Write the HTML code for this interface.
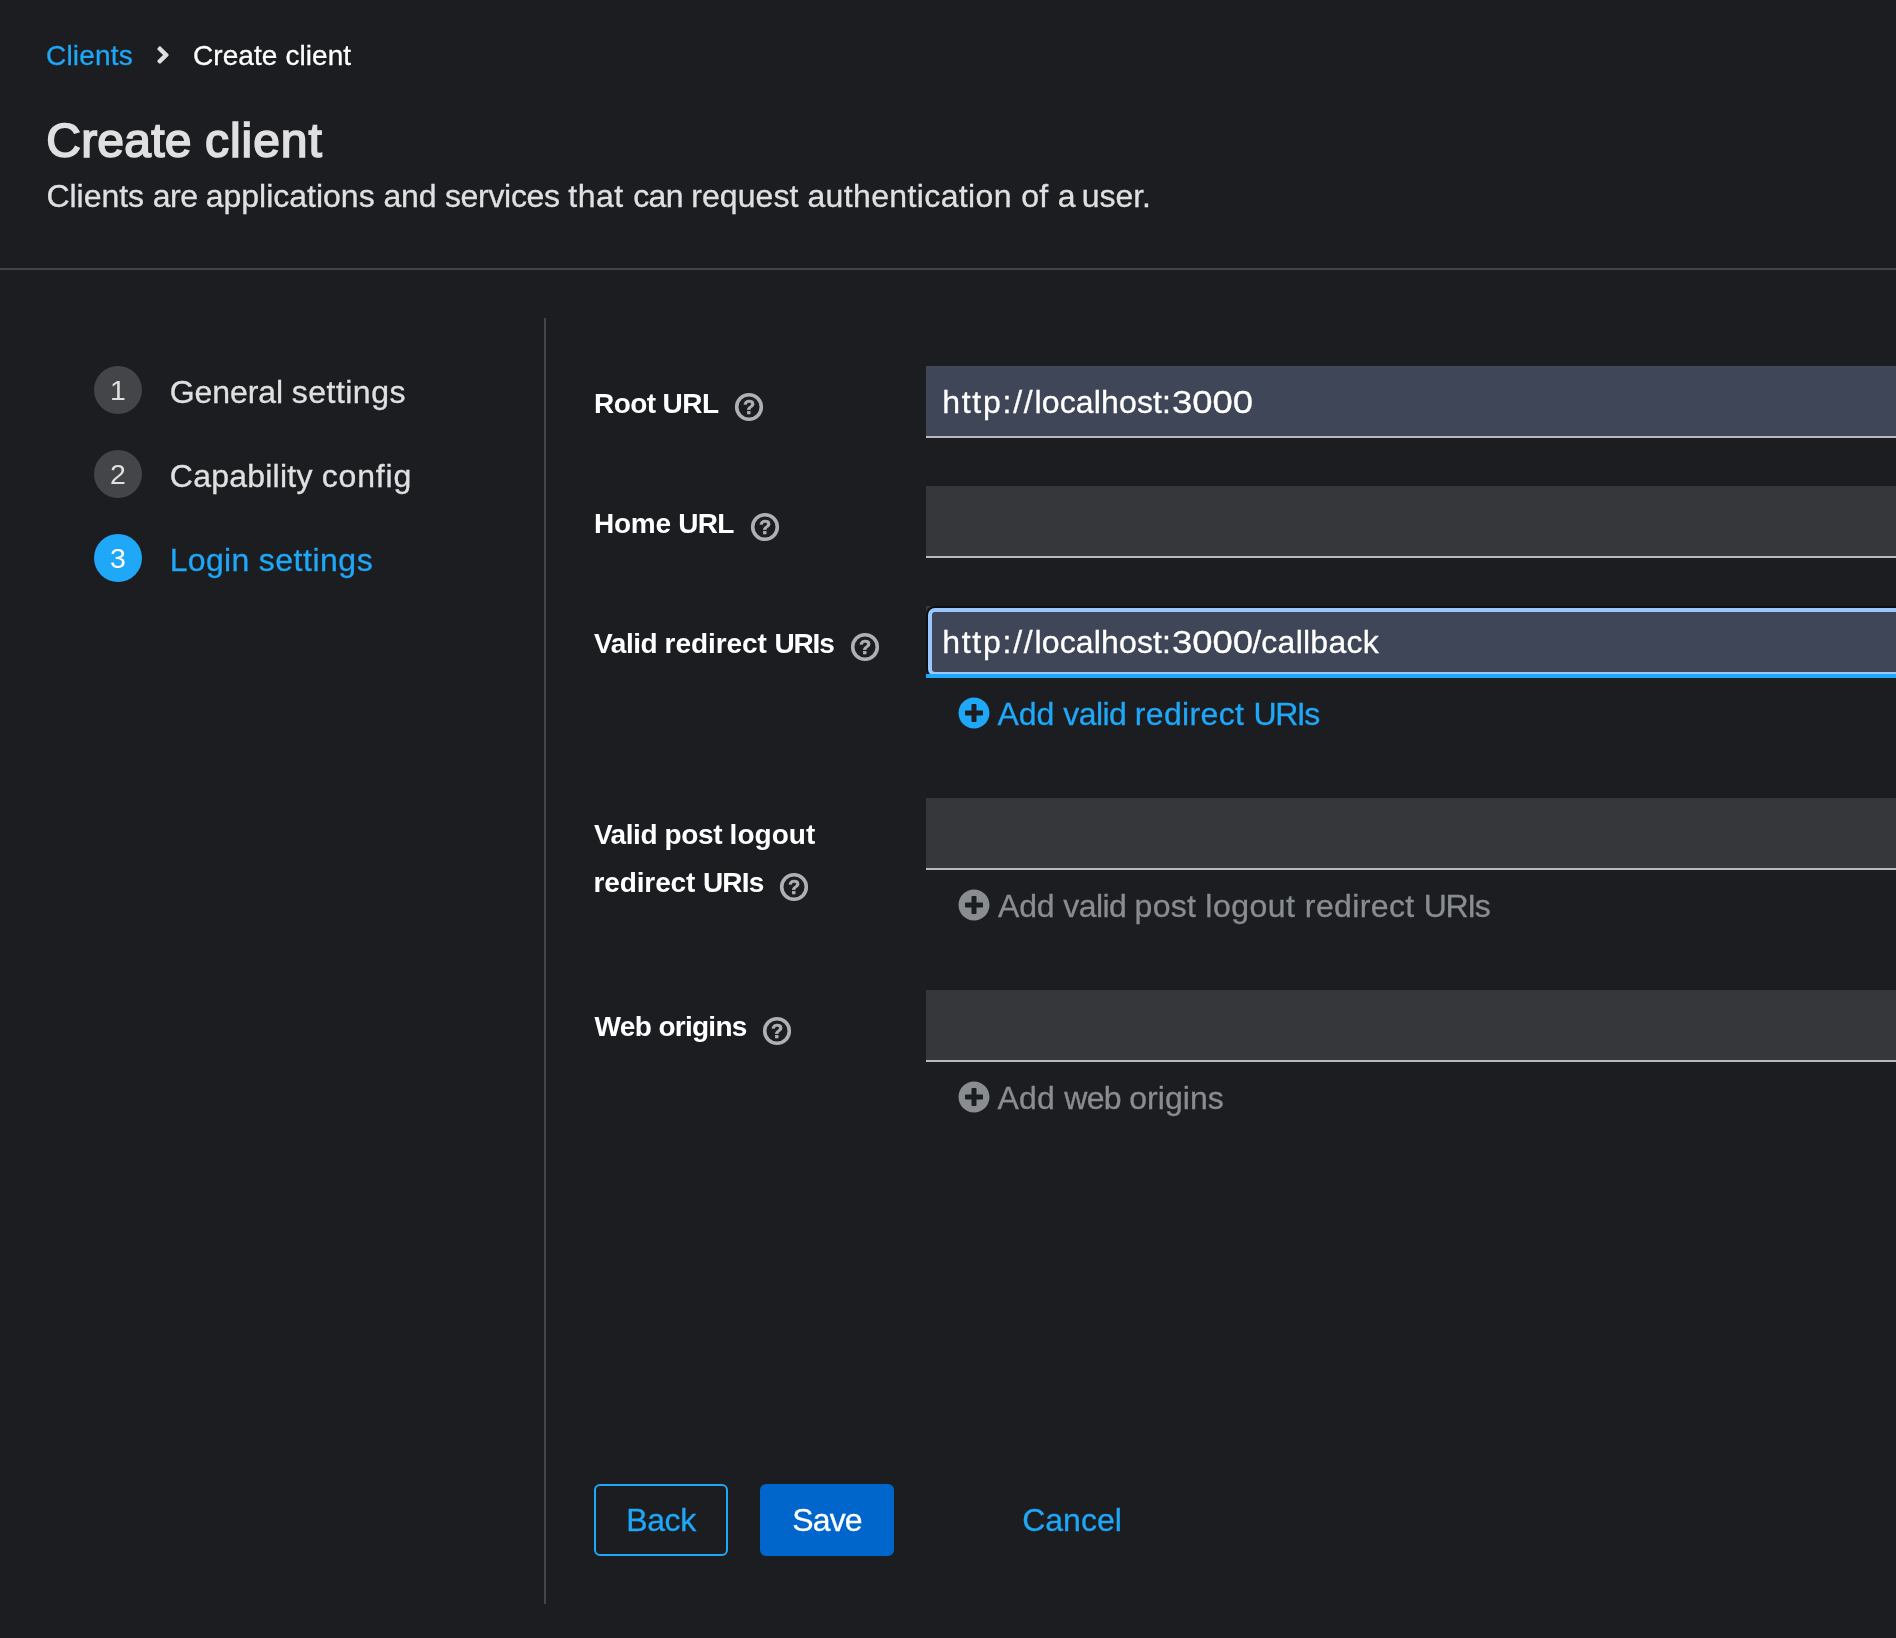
<!DOCTYPE html>
<html lang="en">
<head>
<meta charset="utf-8">
<title>Create client - Keycloak Administration Console</title>
<style>
*{box-sizing:border-box;margin:0;padding:0}
html,body{width:1896px;height:1638px;overflow:hidden;background:#1b1d21}
body{position:relative;will-change:transform;font-family:"Liberation Sans",Arial,sans-serif;color:#e0e0e0;-webkit-font-smoothing:antialiased}
.abs{position:absolute;white-space:nowrap;line-height:1;-webkit-text-stroke:.3px}
a{color:#1fa7f8;text-decoration:none}
/* breadcrumb */
.bc{font-size:28px}
.bc-link{left:46px;top:42px;color:#1fa7f8;letter-spacing:.2px}
.bc-sep{left:155.6px;top:41.1px;width:14px;height:28px}
.bc-cur{left:193px;top:42px;color:#fff;letter-spacing:.08px}
/* header */
h1.title{-webkit-text-stroke:1.7px;font-size:48px;font-weight:400;left:46px;top:116.8px;color:#e0e0e0}
.desc{font-size:32px;left:46.5px;top:179.5px;color:#e0e0e0}
.divider{position:absolute;left:0;top:268px;width:1896px;height:2px;background:#444548}
/* wizard nav */
.vline{position:absolute;left:544px;top:318px;width:2px;height:1286px;background:#444548}
.step-num{position:absolute;left:94px;width:48px;height:48px;border-radius:50%;background:#444548;color:#e0e0e0;font-size:28.5px;line-height:48.5px;text-align:center}
.step-num.cur{background:#1fa7f8;color:#fff}
.step-txt{font-size:32px;left:170px;color:#e0e0e0}
.step-txt.cur{color:#1fa7f8}
/* form */
.lbl{-webkit-text-stroke:0;font-size:28px;font-weight:700;color:#fff;left:594px}
.help{position:absolute;width:30px;height:30px}
.inp{-webkit-text-stroke:.3px;position:absolute;left:926px;width:1000px;height:72px;background:#36373a;border-bottom:2px solid #b8bbbe;color:#fff;font-size:32px;line-height:72px;padding-left:16.2px;white-space:nowrap}
.inp.fill{background:#3e4657}
.inp.focus{border-bottom:0}
.inp.focus .ring{position:absolute;left:6px;top:6px;right:-20px;bottom:6px;border-radius:3px;background:#3e4657;box-shadow:0 0 0 4px #99c8ff,0 0 0 6px #101010}
.inp.focus .bar{position:absolute;left:0;right:0;bottom:0;height:4px;background:#1fa7f8}
.inp .val{position:relative}
.dg{display:inline-block;transform:scaleX(1.14);transform-origin:0 50%;margin-left:.6px}
.add{font-size:32px;left:997.5px;color:#8a8d90}
.add.on{color:#1fa7f8}
.plus{position:absolute;left:957.8px;width:32px;height:32px}
/* buttons */
.btn{-webkit-text-stroke:.3px;font-family:inherit;border:0;background:none;padding:0;margin:0;cursor:pointer;position:absolute;top:1484px;height:72px;width:134px;border-radius:6px;font-size:32px;line-height:72px;text-align:center;white-space:nowrap}
.btn.sec{left:594px;border:2px solid #1fa7f8;color:#1fa7f8;line-height:68px}
.btn.pri{left:760px;background:#06c;color:#fff}
.btn.lnk{left:992px;width:160px;color:#1fa7f8}
</style>
</head>
<body>
<nav aria-label="Breadcrumb">
  <a class="abs bc bc-link" href="#">Clients</a>
  <svg class="abs bc-sep" viewBox="0 0 256 512" aria-hidden="true"><path fill="#e0e0e0" d="M224.3 273l-136 136c-9.4 9.4-24.6 9.4-33.9 0l-22.6-22.6c-9.4-9.4-9.4-24.6 0-33.9l96.4-96.4-96.4-96.4c-9.4-9.4-9.4-24.6 0-33.9L54.3 103c9.4-9.4 24.6-9.4 33.9 0l136 136c9.5 9.4 9.5 24.6.1 34z"/></svg>
  <span class="abs bc bc-cur">Create client</span>
</nav>
<h1 class="abs title" style="left:46.3px"><span style="letter-spacing:0.2px">Create </span><span style="letter-spacing:.92px">client</span></h1>
<p class="abs desc" style="left:46.4px"><span style="letter-spacing:-0.03px">Clients </span><span style="letter-spacing:-0.59px">are </span><span style="letter-spacing:0.0px">applications </span><span style="letter-spacing:-0.22px">and </span><span style="letter-spacing:-0.32px">services </span><span style="letter-spacing:0.51px">that </span><span style="letter-spacing:-0.6px">can </span><span style="letter-spacing:0.07px">request </span><span style="letter-spacing:0.37px">authentication </span><span style="letter-spacing:0.37px">of </span><span style="letter-spacing:-1.39px">a </span><span style="letter-spacing:-0.05px">user.</span></p>
<div class="divider"></div>

<div class="vline"></div>
<ol style="list-style:none">
  <li><span class="step-num" style="top:366px">1</span><span class="abs step-txt" style="top:376px;left:169.8px"><span style="letter-spacing:-0.1px">General </span><span style="letter-spacing:0.49px">settings</span></span></li>
  <li><span class="step-num" style="top:450px">2</span><span class="abs step-txt" style="top:460px;left:169.8px"><span style="letter-spacing:0.23px">Capability </span><span style="letter-spacing:0.84px">config</span></span></li>
  <li><span class="step-num cur" style="top:534px">3</span><span class="abs step-txt cur" style="top:544px;left:169.7px"><span style="letter-spacing:0.3px">Login </span><span style="letter-spacing:0.53px">settings</span></span></li>
</ol>

<form onsubmit="return false">
  <label class="abs lbl" style="top:390px;left:594.1px"><span style="letter-spacing:-0.61px">Root </span><span style="letter-spacing:-0.52px">URL</span></label>
  <svg class="help" style="left:734px;top:392px" viewBox="0 0 30 30"><circle cx="15" cy="15" r="12.3" fill="none" stroke="#aeb0b3" stroke-width="3.6"/><text x="15" y="21.6" text-anchor="middle" font-family="Liberation Sans, Arial, sans-serif" font-weight="700" font-size="20" fill="#aeb0b3" stroke="#aeb0b3" stroke-width=".6">?</text></svg>
  <div class="inp fill" role="textbox" aria-label="Root URL" style="top:366px"><span class="val"><span style="letter-spacing:1.74px">http://</span><span style="letter-spacing:.15px">localhost:</span><span class="dg" style="margin-right:10px">3000</span></span></div>

  <label class="abs lbl" style="top:510px;left:594.1px"><span style="letter-spacing:-0.31px">Home </span><span style="letter-spacing:-0.72px">URL</span></label>
  <svg class="help" style="left:750px;top:512px" viewBox="0 0 30 30"><circle cx="15" cy="15" r="12.3" fill="none" stroke="#aeb0b3" stroke-width="3.6"/><text x="15" y="21.6" text-anchor="middle" font-family="Liberation Sans, Arial, sans-serif" font-weight="700" font-size="20" fill="#aeb0b3" stroke="#aeb0b3" stroke-width=".6">?</text></svg>
  <div class="inp" role="textbox" aria-label="Home URL" style="top:486px"></div>

  <label class="abs lbl" style="top:630px;left:594.1px"><span style="letter-spacing:-0.44px">Valid </span><span style="letter-spacing:-0.08px">redirect </span><span style="letter-spacing:-1.11px">URIs</span></label>
  <svg class="help" style="left:850px;top:632px" viewBox="0 0 30 30"><circle cx="15" cy="15" r="12.3" fill="none" stroke="#aeb0b3" stroke-width="3.6"/><text x="15" y="21.6" text-anchor="middle" font-family="Liberation Sans, Arial, sans-serif" font-weight="700" font-size="20" fill="#aeb0b3" stroke="#aeb0b3" stroke-width=".6">?</text></svg>
  <div class="inp focus" role="textbox" aria-label="Valid redirect URIs" style="top:606px"><div class="ring"></div><span class="val"><span style="letter-spacing:1.74px">http://</span><span style="letter-spacing:.15px">localhost:</span><span class="dg" style="margin-right:9.3px">3000</span><span style="letter-spacing:.25px">/callback</span></span><div class="bar"></div></div>
  <svg class="plus" style="top:696.9px" viewBox="0 0 512 512" aria-hidden="true"><path fill="#1fa7f8" d="M256 8C119 8 8 119 8 256s111 248 248 248 248-111 248-248S393 8 256 8zm144 276c0 6.6-5.4 12-12 12h-92v92c0 6.6-5.4 12-12 12h-56c-6.6 0-12-5.4-12-12v-92h-92c-6.6 0-12-5.4-12-12v-56c0-6.6 5.4-12 12-12h92v-92c0-6.6 5.4-12 12-12h56c6.6 0 12 5.4 12 12v92h92c6.6 0 12 5.4 12 12v56z"/></svg>
  <a class="abs add on" href="#" style="top:698px;left:997.5px"><span style="letter-spacing:-0.03px">Add </span><span style="letter-spacing:-0.53px">valid </span><span style="letter-spacing:0.35px">redirect </span><span style="letter-spacing:-1.47px">URIs</span></a>

  <label class="abs lbl" style="top:821px;left:593.9px"><span style="letter-spacing:-0.42px">Valid </span><span style="letter-spacing:-0.36px">post </span><span style="letter-spacing:0.04px">logout</span></label>
  <label class="abs lbl" style="top:869px;left:593.5px"><span style="letter-spacing:-0.12px">redirect </span><span style="letter-spacing:-0.77px">URIs</span></label>
  <svg class="help" style="left:779px;top:872px" viewBox="0 0 30 30"><circle cx="15" cy="15" r="12.3" fill="none" stroke="#aeb0b3" stroke-width="3.6"/><text x="15" y="21.6" text-anchor="middle" font-family="Liberation Sans, Arial, sans-serif" font-weight="700" font-size="20" fill="#aeb0b3" stroke="#aeb0b3" stroke-width=".6">?</text></svg>
  <div class="inp" role="textbox" aria-label="Valid post logout redirect URIs" style="top:798px"></div>
  <svg class="plus" style="top:888.8px" viewBox="0 0 512 512" aria-hidden="true"><path fill="#8a8d90" d="M256 8C119 8 8 119 8 256s111 248 248 248 248-111 248-248S393 8 256 8zm144 276c0 6.6-5.4 12-12 12h-92v92c0 6.6-5.4 12-12 12h-56c-6.6 0-12-5.4-12-12v-92h-92c-6.6 0-12-5.4-12-12v-56c0-6.6 5.4-12 12-12h92v-92c0-6.6 5.4-12 12-12h56c6.6 0 12 5.4 12 12v92h92c6.6 0 12 5.4 12 12v56z"/></svg>
  <span class="abs add" style="top:890px;left:998.1px"><span style="letter-spacing:-0.18px">Add </span><span style="letter-spacing:-0.55px">valid </span><span style="letter-spacing:0.27px">post </span><span style="letter-spacing:0.49px">logout </span><span style="letter-spacing:0.37px">redirect </span><span style="letter-spacing:-1.37px">URIs</span></span>

  <label class="abs lbl" style="top:1013px;left:594.5px"><span style="letter-spacing:-0.59px">Web </span><span style="letter-spacing:-0.76px">origins</span></label>
  <svg class="help" style="left:762px;top:1016px" viewBox="0 0 30 30"><circle cx="15" cy="15" r="12.3" fill="none" stroke="#aeb0b3" stroke-width="3.6"/><text x="15" y="21.6" text-anchor="middle" font-family="Liberation Sans, Arial, sans-serif" font-weight="700" font-size="20" fill="#aeb0b3" stroke="#aeb0b3" stroke-width=".6">?</text></svg>
  <div class="inp" role="textbox" aria-label="Web origins" style="top:990px"></div>
  <svg class="plus" style="top:1080.8px" viewBox="0 0 512 512" aria-hidden="true"><path fill="#8a8d90" d="M256 8C119 8 8 119 8 256s111 248 248 248 248-111 248-248S393 8 256 8zm144 276c0 6.6-5.4 12-12 12h-92v92c0 6.6-5.4 12-12 12h-56c-6.6 0-12-5.4-12-12v-92h-92c-6.6 0-12-5.4-12-12v-56c0-6.6 5.4-12 12-12h92v-92c0-6.6 5.4-12 12-12h56c6.6 0 12 5.4 12 12v92h92c6.6 0 12 5.4 12 12v56z"/></svg>
  <span class="abs add" style="top:1082px;left:997.5px"><span style="letter-spacing:0.22px">Add </span><span style="letter-spacing:-0.65px">web </span><span style="letter-spacing:0.06px">origins</span></span>

  <button type="button" class="btn sec" style="letter-spacing:-.4px">Back</button>
  <button type="submit" class="btn pri" style="letter-spacing:-.9px">Save</button>
  <button type="button" class="btn lnk">Cancel</button>
</form>
</body>
</html>
